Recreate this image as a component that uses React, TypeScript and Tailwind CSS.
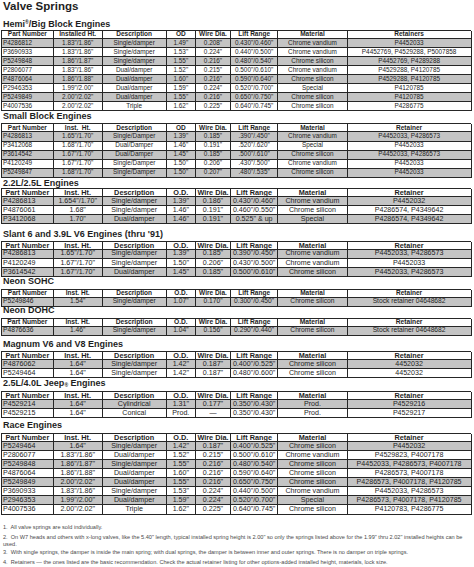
import React from "react";

type Section = {
  title: React.ReactNode;
  headers: string[];
  rows: string[][];
  hSize: string;
  bSize: string;
  mt: string;
  mb: string;
};

const hdrA = ["Part Number", "Installed Ht.", "Description", "OD", "Wire Dia.", "Lift Range", "Material", "Retainers"];
const hdrB = ["Part Number", "Inst.  Ht.", "Description", "OD", "Wire Dia.", "Lift Range", "Material", "Retainer"];
const hdrC = ["Part Number", "Inst. Ht.", "Description", "O.D.", "Wire Dia.", "Lift Range", "Material", "Retainer"];

const sections: Section[] = [
  {
    title: (
      <>
        Hemi<sup className="text-[5px] -top-[3px]">®</sup>/Big Block Engines
      </>
    ),
    headers: hdrA,
    hSize: "text-[6.5px]",
    bSize: "text-[6.4px]",
    mt: "mt-[7px]",
    mb: "mb-[1px]",
    rows: [
      ["P4286812", '1.83"/1.86"', "Single/damper", '1.49"', '0.208"', '0.430"/0.460"', "Chrome vandium", "P4452033"],
      ["P3690933", '1.83"/1.86"', "Single/damper", '1.53"', '0.224"', '0.440"/0.500"', "Chrome vandium", "P4452769, P4529288, P5007858"],
      ["P5249848", '1.86"/1.87"', "Single/damper", '1.55"', '0.216"', '0.480"/0.540"', "Chrome silicon", "P4452769, P4289288"],
      ["P2806077", '1.83"/1.86"', "Dual/damper", '1.52"', '0.215"', '0.500"/0.610"', "Chrome vandium", "P4529288, P4120785"],
      ["P4876064", '1.86"/1.88"', "Dual/damper", '1.60"', '0.216"', '0.590"/0.640"', "Chrome silicon", "P4529288, P4120785"],
      ["P2946353", '1.99"/2.00"', "Dual/damper", '1.59"', '0.224"', '0.520"/0.700"', "Special", "P4120785"],
      ["P5249849", '2.00"/2.02"', "Dual/damper", '1.55"', '0.216"', '0.650"/0.750"', "Chrome silicon", "P4120785"],
      ["P4007536", '2.00"/2.02"', "Triple", '1.62"', '0.225"', '0.640"/0.745"', "Chrome silicon", "P4286775"],
    ],
  },
  {
    title: "Small Block Engines",
    headers: hdrB,
    hSize: "text-[6.5px]",
    bSize: "text-[6.4px]",
    mt: "mt-0",
    mb: "mb-[2px]",
    rows: [
      ["P4286813", '1.65"/1.70"', "Single/Damper", '1.39"', '0.185"', '.390"/.450"', "Chrome vandium", "P4452033, P4286573"],
      ["P3412068", '1.68"/1.70"', "Dual/Damper", '1.46"', '0.191"', '.520"/.620"', "Special", "P4452033"],
      ["P3614542", '1.67"/1.70"', "Dual/Damper", '1.45"', '0.185"', '.500"/.610"', "Chrome silicon", "P4452033, P4286573"],
      ["P4120249", '1.67"/1.70"', "Single/Damper", '1.50"', '0.206"', '.430"/.500"', "Chrome vandium", "P4452033"],
      ["P5249847", '1.68"/1.70"', "Single/Damper", '1.50"', '0.207"', '.480"/.535"', "Chrome silicon", "P4452033"],
    ],
  },
  {
    title: "2.2L/2.5L Engines",
    headers: hdrC,
    hSize: "text-[7.3px]",
    bSize: "text-[7.1px]",
    mt: "mt-[0.5px]",
    mb: "mb-0",
    rows: [
      ["P4286813", '1.654"/1.70"', "Single/damper", '1.39"', '0.186"', '0.430"/0.460"', "Chrome vandium", "P4452032"],
      ["P4876061", '1.68"', "Single/damper", '1.46"', '0.191"', '0.460"/0.550"', "Chrome silicon", "P4286574, P4349642"],
      ["P3412068", '1.70"', "Dual/damper", '1.46"', '0.191"', '0.525" & up', "Special", "P4286574, P4349642"],
    ],
  },
  {
    title: "Slant 6 and 3.9L V6 Engines (thru '91)",
    headers: hdrC,
    hSize: "text-[7.3px]",
    bSize: "text-[7.1px]",
    mt: "mt-[5px]",
    mb: "mb-[1.55px]",
    rows: [
      ["P4286813", '1.65"/1.70"', "Single/damper", '1.39"', '0.185"', '0.390"/0.450"', "Chrome vandium", "P4452033, P4286573"],
      ["P4120249", '1.67"/1.70"', "Single/damper", '1.50"', '0.206"', '0.430"/0.500"', "Chrome vandium", "P4452033"],
      ["P3614542", '1.67"/1.70"', "Dual/damper", '1.45"', '0.185"', '0.500"/0.610"', "Chrome silicon", "P4452033, P4286573"],
    ],
  },
  {
    title: "Neon SOHC",
    headers: hdrC,
    hSize: "text-[6.5px]",
    bSize: "text-[6.7px]",
    mt: "-mt-[1.2px]",
    mb: "mb-[2.7px]",
    rows: [["P5249846", '1.54"', "Single/damper", '1.07"', '0.170"', '0.300"/0.450"', "Chrome silicon", "Stock retainer 04648682"]],
  },
  {
    title: "Neon DOHC",
    headers: hdrC,
    hSize: "text-[6.7px]",
    bSize: "text-[6.7px]",
    mt: "-mt-[1.4px]",
    mb: "mb-[2.3px]",
    rows: [["P4876636", '1.46"', "Single/damper", '1.04"', '0.156"', '0.290"/0.440"', "Chrome silicon", "Stock retainer 04648682"]],
  },
  {
    title: "Magnum V6 and V8 Engines",
    headers: hdrC,
    hSize: "text-[7.3px]",
    bSize: "text-[7.1px]",
    mt: "mt-[3.7px]",
    mb: "mb-[1.8px]",
    rows: [
      ["P4876062", '1.64"', "Single/damper", '1.42"', '0.187"', '0.400"/0.525"', "Chrome silicon", "4452032"],
      ["P5249464", '1.64"', "Single/damper", '1.42"', '0.187"', '0.480"/0.600"', "Chrome silicon", "4452032"],
    ],
  },
  {
    title: (
      <>
        2.5L/4.0L Jeep<sub className="text-[5px] top-[1px]">®</sub> Engines
      </>
    ),
    headers: hdrC,
    hSize: "text-[7.3px]",
    bSize: "text-[7.1px]",
    mt: "-mt-[0.5px]",
    mb: "mb-[3.3px]",
    rows: [
      ["P4529214", '1.64"', "Cylindrical", '1.31"', '0.177"', '0.350"/0.430"', "Prod.", "P4529216"],
      ["P4529215", '1.64"', "Conical", "Prod.", "—", '0.350"/0.430"', "Prod.", "P4529217"],
    ],
  },
  {
    title: "Race Engines",
    headers: hdrC,
    hSize: "text-[7.3px]",
    bSize: "text-[7.1px]",
    mt: "mt-[2px]",
    mb: "mb-[2.8px]",
    rows: [
      ["P5249464", '1.64"', "Single/damper", '1.42"', '0.187"', '0.400"/0.525"', "Chrome silicon", "P4452032"],
      ["P2806077", '1.83"/1.86"', "Dual/damper", '1.52"', '0.215"', '0.500"/0.610"', "Chrome vandium", "P4529823, P4007178"],
      ["P5249848", '1.86"/1.87"', "Single/damper", '1.55"', '0.216"', '0.480"/0.540"', "Chrome silicon", "P4452033, P4286573, P4007178"],
      ["P4876064", '1.86"/1.88"', "Dual/damper", '1.60"', '0.216"', '0.590"/0.640"', "Chrome silicon", "P4286573, P4007178"],
      ["P5249849", '2.00"/2.02"', "Dual/damper", '1.55"', '0.216"', '0.650"/0.750"', "Chrome silicon", "P4286573, P4007178, P4120785"],
      ["P3690933", '1.83"/1.86"', "Single/damper", '1.53"', '0.224"', '0.440"/0.500"', "Chrome vandium", "P4452033, P4286573"],
      ["P2946353", '1.99"/2.00"', "Dual/damper", '1.59"', '0.224"', '0.520"/0.700"', "Special", "P4286573, P4007178, P4120785"],
      ["P4007536", '2.00"/2.02"', "Triple", '1.62"', '0.225"', '0.640"/0.745"', "Chrome silicon", "P4120783, P4286775"],
    ],
  },
];

const gridCols = "grid grid-cols-[51.7px_49px_64px_29.3px_35px_47.3px_69.3px_124px]";

function SpecTable({ s }: { s: Section }) {
  // top border belongs to the header row, so header is 1px shorter
  return (
    <div className="ml-px w-[470px] border-l border-t border-[#262626]">
      <div className={`${gridCols} h-[8.05px] bg-white font-bold ${s.hSize}`}>
        {s.headers.map((h) => (
          <div
            key={h}
            className="flex items-center justify-center overflow-hidden whitespace-pre border-b border-r border-[#262626] leading-none"
          >
            {h}
          </div>
        ))}
      </div>
      {s.rows.map((r, i) => (
        <div
          key={r[0] + i}
          className={`${gridCols} h-[9.05px] ${s.bSize} ${i % 2 === 0 ? "bg-[#c4c4c4]" : "bg-white"}`}
        >
          {r.map((c, j) => (
            <div
              key={j}
              className={`flex items-center overflow-hidden whitespace-nowrap border-b border-r border-[#262626] leading-none ${
                j === 0 ? "justify-start pl-[1px]" : "justify-center"
              }`}
            >
              {c}
            </div>
          ))}
        </div>
      ))}
    </div>
  );
}

export default function App() {
  return (
    <div className="h-[567px] w-[474px] overflow-hidden bg-white font-['Liberation_Sans',Arial,sans-serif] text-[#1e1e1e]">
      <h1 className="pl-[3px] text-[11.5px] font-bold leading-[12px]">Valve Springs</h1>

      {sections.map((s, i) => (
        <div key={i}>
          <h2 className={`pl-[3px] text-[9px] font-bold leading-[10px] ${s.mt} ${s.mb}`}>{s.title}</h2>
          <SpecTable s={s} />
        </div>
      ))}

      {/* notes */}
      <div className="pl-[3px] pr-[2px] text-[5.6px] leading-[6.7px] text-[#4a4a4a]">
        <p className="mt-[9.9px]">1.&nbsp; All valve springs are sold individually.</p>
        <p className="mt-[3.3px]">
          2.&nbsp; On W7 heads and others with x-long valves, like the 5.40" length, typical installed spring height is
          2.00" so only the springs listed above for the 1.99" thru 2.02" installed heights can be used.
        </p>
        <p className="mt-[1.6px]">
          3.&nbsp; With single springs, the damper is inside the main spring; with dual springs, the damper is between
          inner and outer springs. There is no damper on triple springs.
        </p>
        <p className="mt-[3.3px]">
          4.&nbsp; Retainers — the ones listed are the basic recommendation. Check the actual retainer listing for other
          options-added installed height, materials, lock size.
        </p>
      </div>
    </div>
  );
}
